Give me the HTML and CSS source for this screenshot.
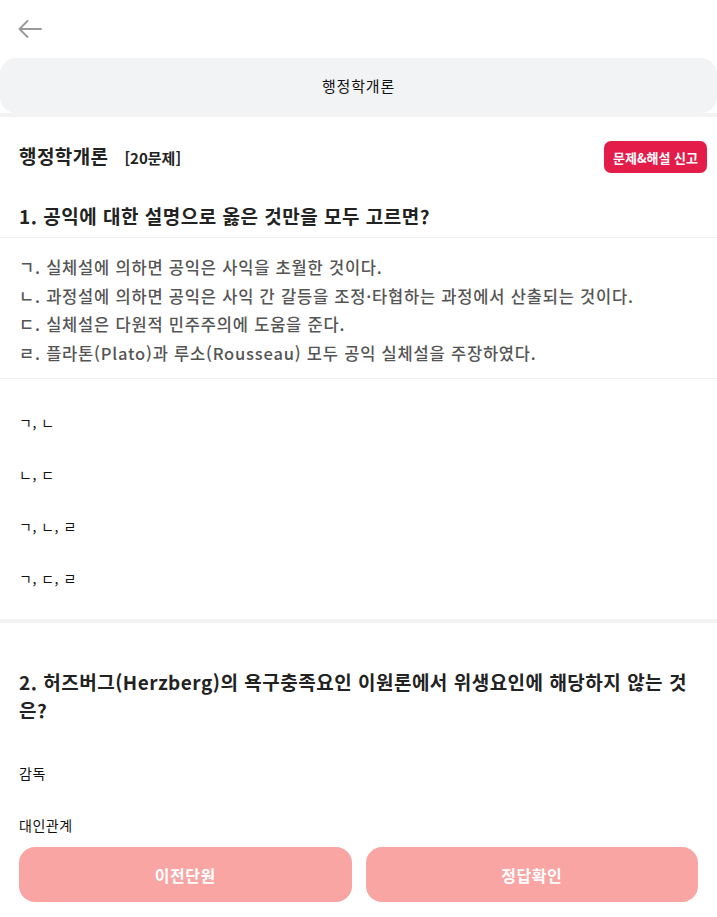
FILE: index.html
```html
<!DOCTYPE html>
<html lang="ko">
<head>
<meta charset="utf-8">
<title>행정학개론</title>
<link rel="stylesheet" href="styles.css">
</head>
<body>
<header class="top">
  <svg class="back" width="24" height="18" viewBox="0 0 24 18" fill="none" stroke="#9a9a9a" stroke-width="1.8" stroke-linecap="round" stroke-linejoin="round">
    <path d="M23 9H1.5M9.5 1L1.5 9l8 8"/>
  </svg>
</header>
<div class="subject-bar">행정학개론</div>
<div class="divider"></div>

<main>
  <section class="question">
    <div class="q-head">
      <h1 class="exam-title">행정학개론<span class="count">[20문제]</span></h1>
      <button class="report">문제&amp;해설 신고</button>
    </div>
    <h2 class="q-title q1">1. 공익에 대한 설명으로 옳은 것만을 모두 고르면?</h2>
    <div class="q-box">
      <p>ㄱ. 실체설에 의하면 공익은 사익을 초월한 것이다.</p>
      <p>ㄴ. 과정설에 의하면 공익은 사익 간 갈등을 조정·타협하는 과정에서 산출되는 것이다.</p>
      <p>ㄷ. 실체설은 다원적 민주주의에 도움을 준다.</p>
      <p>ㄹ. 플라톤(Plato)과 루소(Rousseau) 모두 공익 실체설을 주장하였다.</p>
    </div>
    <ul class="options first">
      <li>ㄱ, ㄴ</li>
      <li>ㄴ, ㄷ</li>
      <li>ㄱ, ㄴ, ㄹ</li>
      <li>ㄱ, ㄷ, ㄹ</li>
    </ul>
  </section>
  <div class="divider"></div>
  <section class="question second">
    <h2 class="q-title">2. 허즈버그(Herzberg)의 욕구충족요인 이원론에서 위생요인에 해당하지 않는 것은?</h2>
    <ul class="options">
      <li>감독</li>
      <li>대인관계</li>
    </ul>
  </section>
</main>

<footer class="actions">
  <button class="action">이전단원</button>
  <button class="action">정답확인</button>
</footer>
</body>
</html>
```
FILE: styles.css
```css
* { box-sizing: border-box; }
html, body {
  margin: 0;
  padding: 0;
  background: #fff;
  font-family: "Noto Sans CJK KR", "Noto Sans", sans-serif;
  color: #222;
}
.top {
  height: 58px;
  display: flex;
  align-items: center;
  padding-left: 18px;
}
.back { display: block; }
.subject-bar {
  height: 55px;
  background: #f2f3f5;
  border-radius: 16px;
  display: flex;
  align-items: center;
  justify-content: center;
  font-size: 15px;
  letter-spacing: 0.8px;
  color: #111;
}
.divider {
  height: 4px;
  background: #f3f3f4;
}
.q-head {
  display: flex;
  justify-content: space-between;
  align-items: center;
  padding: 24px 10px 0 19px;
  height: 56px;
}
.exam-title {
  margin: 0;
  font-size: 19px;
  font-weight: 700;
  color: #222;
  line-height: 32px;
  letter-spacing: 0.4px;
}
.count {
  margin-left: 16px;
  font-size: 15px;
  font-weight: 700;
  letter-spacing: 0;
}
.report {
  height: 32px;
  padding: 0 9px;
  border: 0;
  border-radius: 7px;
  background: #e31c4a;
  color: #fff;
  font-family: inherit;
  font-size: 13px;
  font-weight: 700;
  letter-spacing: 0;
}
.q-title {
  margin: 0;
  padding: 0 19px;
  font-size: 19px;
  font-weight: 700;
  line-height: 28px;
  color: #222;
  letter-spacing: 0.5px;
}
.q1 {
  margin-top: 29px;
  padding-bottom: 7px;
  border-bottom: 1px solid #f0f0f0;
}
.q-box {
  padding: 15px 19px 11px;
  border-bottom: 1px solid #f0f0f0;
}
.q-box p {
  margin: 0;
  font-size: 16.5px;
  font-weight: 500;
  line-height: 28.5px;
  color: #555;
  letter-spacing: 0.8px;
  white-space: nowrap;
}
.options {
  list-style: none;
  margin: 0;
  padding: 17px 19px 15px;
}
.options li {
  height: 52px;
  line-height: 52px;
  font-size: 14px;
  letter-spacing: 0.5px;
  color: #111;
}
.second { padding-top: 45px; }
.second .options { padding-top: 23px; }
.actions {
  position: fixed;
  left: 0;
  right: 0;
  bottom: 0;
  display: flex;
  gap: 14px;
  padding: 10px 19px 15px;
  background: #fff;
}
.action {
  flex: 1;
  height: 55px;
  border: 0;
  border-radius: 16px;
  background: #f9a5a4;
  color: #fff;
  font-family: inherit;
  font-size: 16px;
  font-weight: 700;
  letter-spacing: 0.5px;
}
```
